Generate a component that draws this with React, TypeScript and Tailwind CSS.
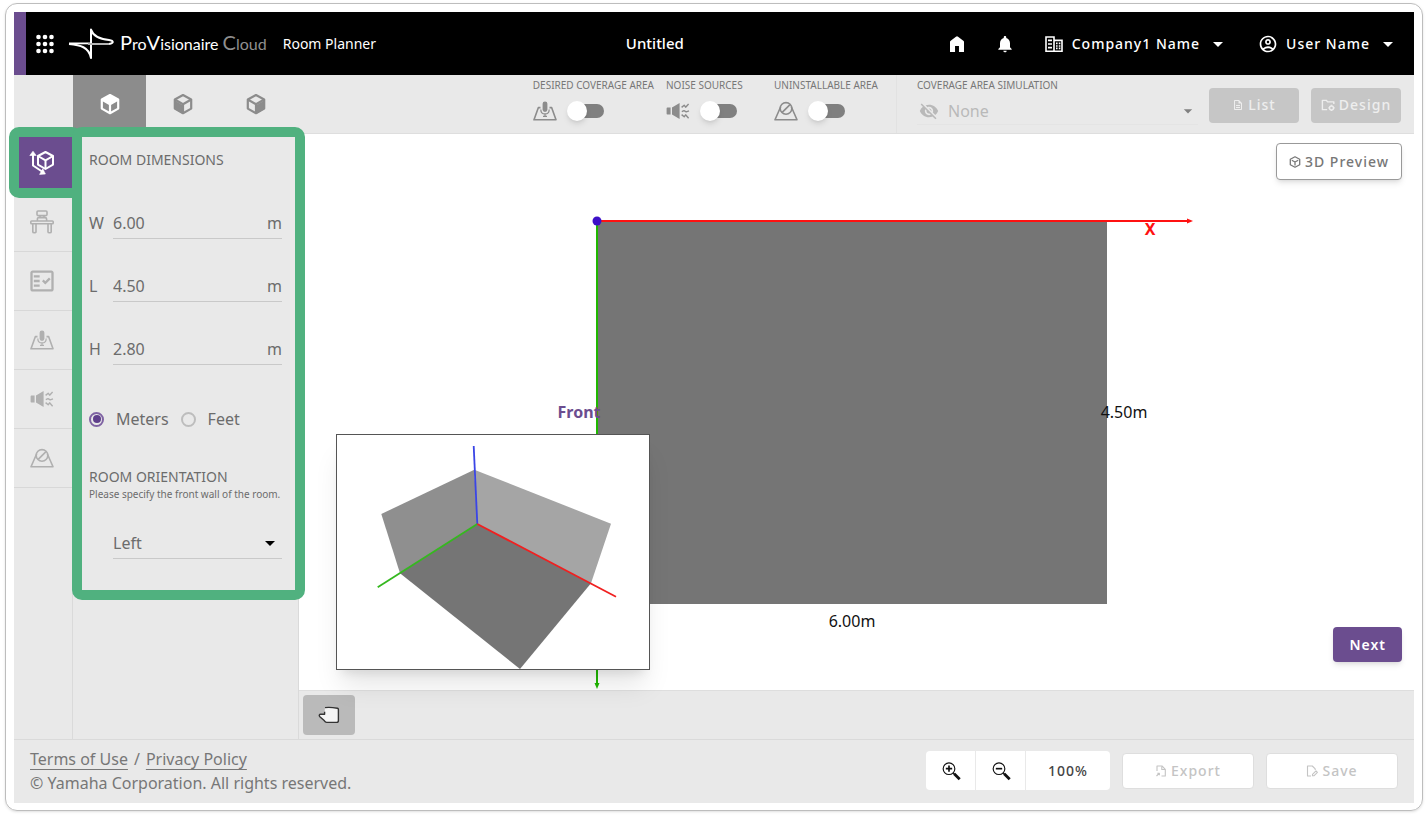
import { useState } from "react"
import type { ReactNode } from "react"
import {
  MdArrowDropDown,
  MdNotifications,
  MdOutlineAccountCircle,
  MdOutlineDescription,
  MdOutlineFactCheck,
  MdVisibilityOff,
} from "react-icons/md"

type Face = "top" | "left" | "right"

const CUBE_FACES: Record<Face, string> = {
  top: "M12 3.2 19.4 7.4 12 11.6 4.6 7.4Z",
  left: "M3.6 8.6 11.2 13V21.2L3.6 16.8Z",
  right: "M20.4 8.6 12.8 13V21.2L20.4 16.8Z",
}

function CubeIcon({ face }: { face: Face }) {
  return (
    <svg viewBox="0 0 24 24" className="size-6" fill="none" stroke="currentColor" strokeWidth="2.2" strokeLinejoin="round">
      <path d="M12 3 20.2 7.5V16.6L12 21.2 3.8 16.6V7.5Z" />
      <path d="M3.8 7.5 12 12.2 20.2 7.5M12 12.2V21" />
      <path d={CUBE_FACES[face]} fill="currentColor" strokeWidth="0.5" />
    </svg>
  )
}

function RoomIcon() {
  return (
    <svg viewBox="0 0 26 26" className="size-[26px]" fill="none" stroke="currentColor" strokeWidth="2" strokeLinejoin="round">
      <path d="M16.5 2 24 6V14.6L16.5 19 9 14.6V6Z" />
      <path d="M9 6 16.5 10.4 24 6M16.5 10.4V19" />
      <path d="M4 4V15.5L14.5 22.5" />
      <path d="M0.8 5.5 4 1.2 7.2 5.5Z M13.8 18.8 16.4 24 10.6 24.4Z" fill="currentColor" strokeWidth="0.6" />
    </svg>
  )
}

function DeskIcon() {
  return (
    <svg viewBox="0 0 24 24" className="size-6" fill="none" stroke="currentColor" strokeWidth="1.6" strokeLinejoin="round">
      <rect x="7" y="1" width="10" height="4.6" rx="1" />
      <path d="M10 5.6V7.6M14 5.6V7.6M7.4 11V9C7.4 8 8 7.6 9 7.6H15C16 7.6 16.6 8 16.6 9V11" />
      <rect x="0.8" y="11" width="22.4" height="2.8" rx="0.8" />
      <path d="M2.8 13.8V22C2.8 23 6 23 6 22V13.8M18 13.8V22C18 23 21.2 23 21.2 22V13.8" />
    </svg>
  )
}

function CoverageIcon() {
  return (
    <svg viewBox="0 0 24 24" className="size-6" fill="none" stroke="currentColor" strokeWidth="1.6" strokeLinejoin="round">
      <path d="M7.5 8.6H5.4L1 20.8H23L18.6 8.6H16.5" />
      <rect x="9.6" y="2.4" width="4.8" height="10.6" rx="2.4" fill="currentColor" stroke="none" />
      <path d="M7.8 10.4C7.8 16.4 16.2 16.4 16.2 10.4M12 15V17M10 17.4H14" strokeWidth="1.2" />
    </svg>
  )
}

function NoiseIcon() {
  return (
    <svg viewBox="0 0 24 24" className="size-6" fill="none" stroke="currentColor" strokeWidth="1.4" strokeLinejoin="round">
      <path d="M1.4 8.6H4.6V15.6H1.4C0.9 15.6 0.6 15.3 0.6 14.8V9.4C0.6 8.9 0.9 8.6 1.4 8.6ZM6 8.6 13.6 4V20L6 15.6Z" fill="currentColor" stroke="none" />
      <path d="M15.6 8.4 18.2 6.2 19.6 8.2 22.6 5M15.8 12.6 18 11.6 20.2 12.8 23 11.8M15.6 15.6 18.2 17.8 19.6 15.8 22.6 19.2" />
    </svg>
  )
}

function BlockedIcon() {
  return (
    <svg viewBox="0 0 24 24" className="size-6" fill="none" stroke="currentColor" strokeWidth="1.6" strokeLinejoin="round">
      <path d="M6.6 8 1 20.8H23L17.4 8" />
      <circle cx="12" cy="9.4" r="5.8" />
      <path d="M8.2 13.4 16 5.6" />
    </svg>
  )
}

function HandIcon() {
  return (
    <svg viewBox="0 0 24 24" className="size-6" fill="#f4f4f4" stroke="#333" strokeWidth="1.4" strokeLinejoin="round">
      <path d="M8 4.6C12 4 17 4.6 20.4 5.2C21 5.3 21.4 5.8 21.4 6.4V17.4C21.4 18.6 20.8 19.4 19.6 19.4H9.6C8.4 19.4 7.8 18.6 7.2 17.6L2.6 13.4C1.8 12.4 2.4 11.2 3.6 11.2H7.6V8.8" />
    </svg>
  )
}

function CompanyIcon() {
  return (
    <svg viewBox="0 0 20 20" className="size-5" fill="none" stroke="currentColor" strokeWidth="1.6">
      <path d="M2 3H10V17.2H2Z" />
      <path d="M4 6.4H8M4 10H8M4 13.6H8" />
      <path d="M10 6.4H18V17.2H10" />
      <path d="M12 9.4H13.6M14.8 9.4H16.4M12 12H13.6M14.8 12H16.4M12 14.4H13.6M14.8 14.4H16.4" />
    </svg>
  )
}

function ZoomIcon({ plus }: { plus?: boolean }) {
  return (
    <svg viewBox="0 0 24 24" className="size-5" fill="none" stroke="#111">
      <circle cx="9.6" cy="9.2" r="7" strokeWidth="1.4" />
      <path d={plus ? "M5.8 9.2H13.4M9.6 5.4V13" : "M5.8 9.2H13.4"} strokeWidth="2" />
      <path d="M14.6 14.2 16.2 15.8" strokeWidth="1.6" />
      <path d="M15.8 15.4 22.4 22" strokeWidth="3.4" />
    </svg>
  )
}

function BoxIcon() {
  return (
    <svg viewBox="0 0 24 24" className="size-3" fill="none" stroke="currentColor" strokeWidth="2.6" strokeLinejoin="round">
      <path d="M12 1.6 21.4 6.6V17.4L12 22.4 2.6 17.4V6.6Z" />
      <path d="M5.6 8.6 12 12 18.4 8.6M12 12V19" />
    </svg>
  )
}

function FolderGearIcon() {
  return (
    <svg viewBox="0 0 24 24" className="size-[14px]" fill="none" stroke="currentColor" strokeWidth="2.4" strokeLinejoin="round">
      <path d="M10.5 20H2.4V4H9L11.4 6.6H22V10.4" />
      <circle cx="18" cy="17" r="3.4" />
      <path d="M18 11.6V13.4M18 20.6V22.4M12.6 17H14.4M21.6 17H23.4" />
    </svg>
  )
}

function ExportIcon() {
  return (
    <svg viewBox="0 0 24 24" className="size-3" fill="none" stroke="currentColor" strokeWidth="2.2" strokeLinejoin="round">
      <path d="M4 12V2H14L20.6 8.6V22H13" />
      <path d="M13.6 2.4V9H20" />
      <path d="M3 22 8 17M4.6 16.4H8.8V20.6" />
    </svg>
  )
}

function SaveIcon() {
  return (
    <svg viewBox="0 0 24 24" className="size-3" fill="none" stroke="currentColor" strokeWidth="2.2" strokeLinejoin="round">
      <path d="M10 22H3V2H12.6L18.4 7.8V10" />
      <path d="M13 21.6V18.8L20 11.8L22.8 14.6L15.8 21.6Z" />
    </svg>
  )
}

function AppsIcon() {
  return (
    <svg viewBox="0 0 18 20" className="h-5 w-[18px]" fill="#fff">
      {[3, 10, 17].map((y) => [2.5, 9, 15.5].map((x) => <circle key={`${x}-${y}`} cx={x} cy={y} r="2.3" />))}
    </svg>
  )
}

function ProductMark() {
  return (
    <svg viewBox="0 0 46 32" className="h-8 w-[46px]" fill="none" strokeLinejoin="round">
      <path d="M1 15.4H22.5" stroke="#fff" strokeWidth="1.8" />
      <path d="M1 16C12 17 21 19 23 30V16" stroke="#fff" strokeWidth="2" />
      <path d="M23 15.6V1.6C25 8 32 11 41 12C46 12.8 46 15 41 16" stroke="#fff" strokeWidth="2" />
      <path d="M20 16H41" stroke="#b5b5b5" strokeWidth="2" />
    </svg>
  )
}

const VIEWS: { id: Face; label: string }[] = [
  { id: "top", label: "Top view" },
  { id: "left", label: "Left view" },
  { id: "right", label: "Right view" },
]

const STEPS: { label: string; icon: ReactNode }[] = [
  { label: "Room", icon: <RoomIcon /> },
  { label: "Furniture", icon: <DeskIcon /> },
  { label: "Requirements", icon: <MdOutlineFactCheck className="size-7" /> },
  { label: "Desired coverage area", icon: <CoverageIcon /> },
  { label: "Noise sources", icon: <NoiseIcon /> },
  { label: "Uninstallable area", icon: <BlockedIcon /> },
]

function Header() {
  return (
    <header className="flex h-[63px] items-center justify-between border-l-[12px] border-[#6b4d8f] bg-black text-white">
      <div className="flex items-center">
        <button aria-label="Apps" className="ml-[10px]">
          <AppsIcon />
        </button>
        <div className="ml-[14px] flex items-center">
          <ProductMark />
          <span className="ml-[6px] whitespace-nowrap font-[Lato] text-base leading-8">
            <span className="text-xl">P</span>ro<span className="text-xl">V</span>isionaire{" "}
            <span className="text-[#8f8f8f]">
              <span className="text-xl">C</span>loud
            </span>
          </span>
        </div>
        <span className="ml-4 text-sm">Room Planner</span>
      </div>
      <h1 className="text-[15px] font-medium">Untitled</h1>
      <nav className="flex items-center pr-[14px] text-sm font-medium tracking-[1px]">
        <button aria-label="Home" className="px-4">
          <svg viewBox="160 -840 640 720" className="h-4 w-[14px]" fill="currentColor">
            <path d="M160-120v-450q0-19 8.500-36T192-634l240-180q21-16 48-16t48 16l240 180q15 11 23.500 28t8.500 36v450H570v-270H390v270H160Z" />
          </svg>
        </button>
        <button aria-label="Notifications" className="pl-[15px] pr-[29px]">
          <MdNotifications className="size-5" />
        </button>
        <button className="flex items-center">
          <CompanyIcon />
          <span className="ml-2">Company1 Name</span>
          <MdArrowDropDown className="ml-[6px] size-6" />
        </button>
        <button className="ml-7 flex items-center">
          <MdOutlineAccountCircle className="size-5" />
          <span className="ml-2">User Name</span>
          <MdArrowDropDown className="ml-[6px] size-6" />
        </button>
      </nav>
    </header>
  )
}

function ToggleGroup({ id, label, icon, className }: { id: string; label: string; icon: ReactNode; className?: string }) {
  return (
    <div className={className}>
      <label htmlFor={id} className="block whitespace-nowrap text-[10px] leading-4">
        {label}
      </label>
      <div className="mt-1 flex h-7 items-center text-[#8c8c8c]">
        {icon}
        <input
          id={id}
          type="checkbox"
          className="relative ml-[14px] h-[14px] w-[33px] appearance-none rounded-full bg-[#808080] before:absolute before:-left-1 before:-top-[3px] before:size-5 before:rounded-full before:bg-white before:shadow-md checked:before:left-4"
        />
      </div>
    </div>
  )
}

function Toolbar() {
  const [view, setView] = useState<Face>("top")

  return (
    <div className="flex h-[59px] border-b border-[#dedede] text-[#777]">
      <div className="flex pl-[59px]">
        {VIEWS.map((v) => (
          <button
            key={v.id}
            aria-label={v.label}
            onClick={() => setView(v.id)}
            className={`flex w-[73px] items-center justify-center ${view === v.id ? "bg-[#8c8c8c] text-white" : "text-[#8c8c8c]"}`}
          >
            <CubeIcon face={v.id} />
          </button>
        ))}
      </div>
      <div className="ml-auto flex gap-3 pt-[2px]">
        <ToggleGroup id="coverage" label="DESIRED COVERAGE AREA" icon={<CoverageIcon />} />
        <ToggleGroup id="noise" label="NOISE SOURCES" icon={<NoiseIcon />} className="min-w-24" />
        <ToggleGroup id="blocked" label="UNINSTALLABLE AREA" icon={<BlockedIcon />} />
      </div>
      <div className="ml-[18px] flex items-center border-l border-[#e2e2e2] pl-5 pr-[13px]">
        <div className="w-[281px] self-start pt-[2px]">
          <label htmlFor="simulation" className="block text-[10px] leading-4">
            COVERAGE AREA SIMULATION
          </label>
          <div className="mt-1 flex h-7 items-center border-b border-[#e4e4e4] text-[#b9b9b9]">
            <MdVisibilityOff className="ml-[2px] size-5" />
            <select id="simulation" disabled className="ml-[9px] -mr-6 flex-1 appearance-none bg-transparent text-base">
              <option>None</option>
            </select>
            <MdArrowDropDown className="pointer-events-none size-5 text-[#808080]" />
          </div>
        </div>
        <div className="ml-[11px] flex gap-3 pt-[2px] text-sm font-medium tracking-[1px] text-[#eee]">
          <button disabled className="flex h-[35px] w-[90px] items-center justify-center gap-1 rounded bg-[#c6c6c6]">
            <MdOutlineDescription className="size-3" />
            List
          </button>
          <button disabled className="flex h-[35px] w-[90px] items-center justify-center gap-1 rounded bg-[#c6c6c6]">
            <FolderGearIcon />
            Design
          </button>
        </div>
      </div>
    </div>
  )
}

function StepNav() {
  return (
    <nav className="w-[59px] shrink-0 border-r border-[#dadada]">
      {STEPS.map((step, i) => (
        <div key={step.label} className="relative">
          <button
            aria-label={step.label}
            className={`flex h-[59px] w-full items-center justify-center border-b border-[#d8d8d8] pr-[3px] ${
              i === 0 ? "bg-[#6b4d8f] text-white" : "text-[#b0b0b0]"
            }`}
          >
            {step.icon}
          </button>
          {i === 0 && (
            <div className="pointer-events-none absolute -left-[5px] -top-[7px] z-10 h-[71px] w-[73px] rounded-[10px] border-[10px] border-[#50b17f]" />
          )}
        </div>
      ))}
    </nav>
  )
}

function DimensionField({ id, value, onChange }: { id: string; value: string; onChange: (v: string) => void }) {
  return (
    <div className="flex h-8 items-center">
      <label htmlFor={id} className="w-6">
        {id}
      </label>
      <div className="flex h-8 flex-1 items-center border-b border-[#c9c9c9]">
        <input id={id} value={value} onChange={(e) => onChange(e.target.value)} className="w-full min-w-0 flex-1 bg-transparent outline-none" />
        <span>m</span>
      </div>
    </div>
  )
}

function RoomPanel() {
  const [size, setSize] = useState<Record<string, string>>({ W: "6.00", L: "4.50", H: "2.80" })
  const [unit, setUnit] = useState("Meters")

  return (
    <section className="relative w-[226px] shrink-0 border-r border-[#dadada] px-4 pt-4 text-base text-[#6c6c6c]">
      <h2 className="text-sm">ROOM DIMENSIONS</h2>
      <div className="mt-[37px] flex flex-col gap-[31px]">
        {Object.keys(size).map((key) => (
          <DimensionField key={key} id={key} value={size[key]} onChange={(v) => setSize({ ...size, [key]: v })} />
        ))}
      </div>
      <div className="mt-[42px] flex h-6 items-center gap-3">
        {["Meters", "Feet"].map((u) => (
          <label key={u} className="flex items-center gap-3">
            <input
              type="radio"
              name="unit"
              checked={unit === u}
              onChange={() => setUnit(u)}
              className="flex size-[15px] appearance-none items-center justify-center rounded-full border-2 border-[#bdbdbd] before:size-2 before:rounded-full checked:border-[#7f63a3] checked:before:bg-[#5f3f8c]"
            />
            {u}
          </label>
        ))}
      </div>
      <h2 className="mt-9 text-sm">ROOM ORIENTATION</h2>
      <label htmlFor="orientation" className="block whitespace-nowrap text-[10px] leading-[14px]">
        Please specify the front wall of the room.
      </label>
      <div className="ml-6 mt-[26px] flex h-8 items-center border-b border-[#c9c9c9]">
        <select id="orientation" className="-mr-6 flex-1 appearance-none bg-transparent outline-none">
          <option>Left</option>
          <option>Right</option>
        </select>
        <MdArrowDropDown className="pointer-events-none size-6 text-black" />
      </div>
      <div className="pointer-events-none absolute -left-px -top-[7px] z-20 h-[473px] w-[233px] rounded-[10px] border-[10px] border-[#50b17f]" />
    </section>
  )
}

function FloorPlan() {
  return (
    <svg viewBox="0 -1 1115 556" className="absolute inset-0 size-full" fontSize="16">
      <rect x="298" y="86" width="510" height="383" fill="#757575" />
      <path d="M298 86V549" stroke="#1fb800" strokeWidth="2" />
      <path d="M295.500 548H300.500L298 554Z" fill="#1fb800" />
      <path d="M298 86H889" stroke="#f11" strokeWidth="2" />
      <path d="M888 83.500V88.500L894 86Z" fill="#f11" />
      <circle cx="298" cy="86" r="4.500" fill="#3d10c8" />
      <text x="851" y="100" textAnchor="middle" fontWeight="700" fill="#f11">
        X
      </text>
      <text x="280" y="283" textAnchor="middle" fontWeight="700" fill="#6b4d8f">
        Front
      </text>
      <text x="825" y="283" textAnchor="middle" fill="#111">
        4.50m
      </text>
      <text x="553" y="492" textAnchor="middle" fill="#111">
        6.00m
      </text>
    </svg>
  )
}

function RoomPreview() {
  return (
    <div className="absolute bottom-5 left-[37px] h-[236px] w-[314px] border border-[#555] bg-white shadow-xl">
      <svg viewBox="0 0 312 234" className="size-full" fill="none" strokeWidth="1.8">
        <path d="M137.300 34.700 44.300 79 63 138.300 140.300 89Z" fill="#8f8f8f" />
        <path d="M137.300 34.700 274 88.700 254 148.300 140.300 89Z" fill="#a5a5a5" />
        <path d="M140.300 89 63 138.300 183 234 254 148.300Z" fill="#757575" />
        <path d="M140.300 89 136.700 11" stroke="#3a45e6" />
        <path d="M140.300 89 40.700 152.300" stroke="#35b81f" />
        <path d="M140.300 89 279 161.700" stroke="#f02020" />
      </svg>
    </div>
  )
}

function Canvas() {
  return (
    <main className="flex min-w-0 flex-1 flex-col">
      <div className="relative min-h-[556px] flex-1 bg-white">
        <FloorPlan />
        <RoomPreview />
        <button className="absolute right-3 top-[9px] flex h-[37px] items-center gap-1 rounded border border-[#999] bg-white px-3 text-sm font-medium tracking-[1px] text-[#777] shadow-md">
          <BoxIcon />
          3D Preview
        </button>
        <button className="absolute bottom-7 right-3 h-[35px] rounded bg-[#6b4d8f] px-4 text-sm font-semibold tracking-[1px] text-white shadow-md">
          Next
        </button>
      </div>
      <div className="flex h-[49px] items-center border-t border-[#dedede] px-1">
        <button aria-label="Pan" className="flex h-10 w-[52px] items-center justify-center rounded bg-[#bababa]">
          <HandIcon />
        </button>
      </div>
    </main>
  )
}

function Footer() {
  return (
    <footer className="flex h-16 items-center justify-between border-t border-[#dadada] px-4 pb-[2px] text-base text-[#777]">
      <div>
        <p>
          <a href="#terms" className="underline underline-offset-4">Terms of Use</a>
          <span className="mx-[6px]">/</span>
          <a href="#privacy" className="underline underline-offset-4">Privacy Policy</a>
        </p>
        <p>© Yamaha Corporation. All rights reserved.</p>
      </div>
      <div className="flex items-center gap-3 text-sm font-medium tracking-[1px]">
        <div className="flex h-[39px] divide-x divide-[#e9e9e9] rounded bg-white">
          <button aria-label="Zoom in" className="flex w-[50px] items-center justify-center">
            <ZoomIcon plus />
          </button>
          <button aria-label="Zoom out" className="flex w-[50px] items-center justify-center">
            <ZoomIcon />
          </button>
          <button className="w-[84px] text-[#444]">100%</button>
        </div>
        <button disabled className="flex h-9 w-[132px] items-center justify-center gap-1 rounded border border-[#dedede] bg-white text-[#c4c4c4]">
          <ExportIcon />
          Export
        </button>
        <button disabled className="flex h-9 w-[132px] items-center justify-center gap-1 rounded border border-[#dedede] bg-white text-[#c4c4c4]">
          <SaveIcon />
          Save
        </button>
      </div>
    </footer>
  )
}

export default function App() {
  return (
    <div className="flex min-h-screen flex-col bg-white px-[5px] pb-[7px] pt-[3px] font-['Noto_Sans',sans-serif]">
      <div className="flex flex-1 flex-col rounded-xl border border-[#bdbdbd] p-2 pb-[7px] shadow-sm">
        <div className="flex flex-1 flex-col bg-[#e9e9e9]">
          <Header />
          <Toolbar />
          <div className="flex flex-1">
            <StepNav />
            <RoomPanel />
            <Canvas />
          </div>
          <Footer />
        </div>
      </div>
    </div>
  )
}
